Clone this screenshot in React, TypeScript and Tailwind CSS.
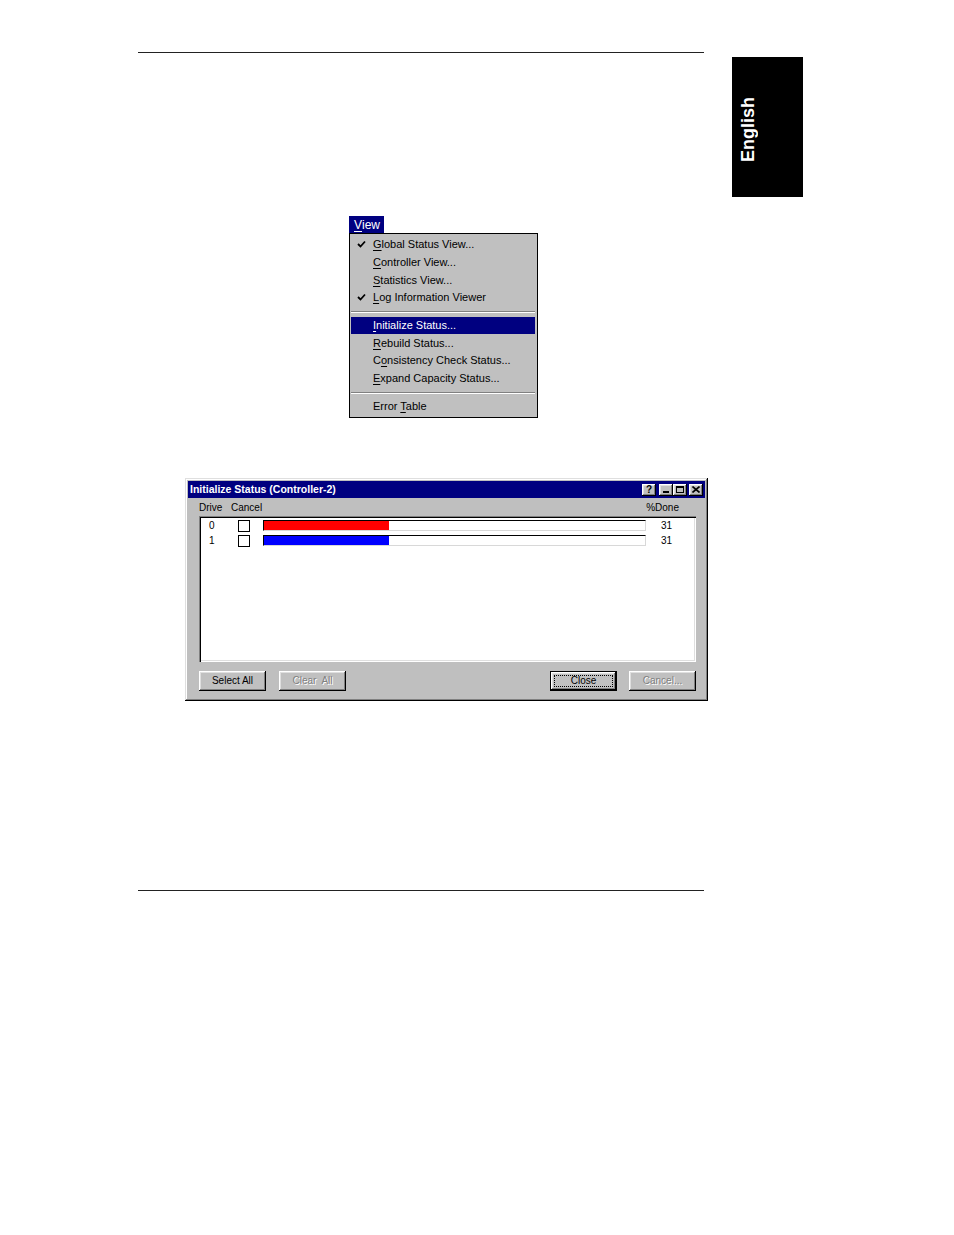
import React from "react";

const raised =
  "shadow-[inset_-1px_-1px_0_#000,inset_1px_1px_0_#fff,inset_-2px_-2px_0_#808080,inset_2px_2px_0_#dfdfdf]";

function Check() {
  return (
    <svg width="9" height="9" viewBox="0 0 9 9" className="block">
      <path d="M1 4 L3.5 6.5 L8 1.5" stroke="#000" strokeWidth="1.8" fill="none" />
    </svg>
  );
}

function MenuItem({
  label,
  checked,
  active,
}: {
  label: React.ReactNode;
  checked?: boolean;
  active?: boolean;
}) {
  return (
    <div
      className={
        "flex items-center h-[17.7px] " +
        (active ? "bg-[#000080] text-white" : "text-black")
      }
    >
      <div className="w-[22px] flex justify-end pr-[7px]">{checked ? <Check /> : null}</div>
      <span className="leading-none">{label}</span>
    </div>
  );
}

function Sep() {
  return (
    <div className="py-[4px]">
      <div className="h-px bg-[#808080]" />
      <div className="h-px bg-white" />
    </div>
  );
}

function U({ children }: { children: React.ReactNode }) {
  return <span className="underline underline-offset-[2px]">{children}</span>;
}

function TitleBtn({ children, className = "" }: { children: React.ReactNode; className?: string }) {
  return (
    <div
      className={
        "w-[14px] h-[12px] bg-[#c0c0c0] flex items-center justify-center text-black " +
        raised +
        " " +
        className
      }
    >
      {children}
    </div>
  );
}

function Btn({
  label,
  disabled,
  isDefault,
}: {
  label: string;
  disabled?: boolean;
  isDefault?: boolean;
}) {
  const inner = (
    <div
      className={
        "w-full h-full flex items-center justify-center bg-[#c0c0c0] " +
        raised +
        (disabled ? " text-[#808080] [text-shadow:1px_1px_0_#fff]" : " text-black")
      }
    >
      {isDefault ? (
        <div className="border border-dotted border-black w-[59px] h-[12px] flex items-center justify-center leading-none">
          {label}
        </div>
      ) : (
        <span className="leading-none whitespace-pre">{label}</span>
      )}
    </div>
  );
  if (isDefault) {
    return <div className="w-[67px] h-[20px] border border-black">{inner}</div>;
  }
  return <div className="w-[67px] h-[20px]">{inner}</div>;
}

function Row({ n, color }: { n: string; color: string }) {
  return (
    <div className="flex items-center h-[15px]">
      <div className="w-[37px] pl-[8px] leading-none">{n}</div>
      <div className="w-[12px] h-[12px] border border-black bg-white" />
      <div className="ml-[13px] w-[383px] h-[11px] bg-white border-t border-l border-black border-b border-r border-b-[#d8d8d8] border-r-[#d8d8d8] flex">
        <div className="h-full" style={{ width: "125px", backgroundColor: color }} />
      </div>
      <div className="ml-[15px] leading-none">31</div>
    </div>
  );
}

export default function App() {
  return (
    <div className="relative w-[954px] h-[1235px] bg-white overflow-hidden font-['Liberation_Sans',Arial,sans-serif]">
      {/* Side tab */}
      <div className="absolute left-[732px] top-[57px] w-[71px] h-[140px] bg-black flex items-center pl-[5px]">
        <span className="[writing-mode:vertical-rl] rotate-180 text-white font-bold text-[18px] leading-[22px] mt-[5px]">
          English
        </span>
      </div>

      {/* top rule */}
      <div className="pt-[52px] pl-[138px]">
        <div className="w-[566px] h-px bg-[#222]" />
      </div>

      {/* Menu */}
      <div className="ml-[349px] mt-[163px] text-[11px]">
        <div className="w-[35px] h-[17px] bg-[#000080] text-white flex items-center pl-[5px] text-[12px] leading-none">
          <U>V</U>iew
        </div>
        <div className="w-[189px] h-[185px] bg-[#c0c0c0] border border-black pt-[2px] pl-px pr-[2px]">
          <MenuItem checked label={<><U>G</U>lobal Status View...</>} />
          <MenuItem label={<><U>C</U>ontroller View...</>} />
          <MenuItem label={<><U>S</U>tatistics View...</>} />
          <MenuItem checked label={<><U>L</U>og Information Viewer</>} />
          <Sep />
          <MenuItem active label={<><U>I</U>nitialize Status...</>} />
          <MenuItem label={<><U>R</U>ebuild Status...</>} />
          <MenuItem label={<>C<U>o</U>nsistency Check Status...</>} />
          <MenuItem label={<><U>E</U>xpand Capacity Status...</>} />
          <Sep />
          <MenuItem label={<>Error <U>T</U>able</>} />
        </div>
      </div>

      {/* Dialog */}
      <div
        className={
          "ml-[185px] mt-[60px] w-[523px] h-[223px] bg-[#bfbfbf] p-[3px] flex flex-col text-[10px] " +
          "shadow-[inset_-1px_-1px_0_#000,inset_1px_1px_0_#dfdfdf,inset_-2px_-2px_0_#808080,inset_2px_2px_0_#fff]"
        }
      >
        <div className="h-[17px] bg-[#000080] flex items-center pl-[2px] pr-[2px]">
          <span className="text-white font-bold text-[10.5px] leading-none">
            Initialize Status (Controller-2)
          </span>
          <div className="ml-auto flex items-center">
            <TitleBtn>
              <span className="font-bold text-[10px] leading-none">?</span>
            </TitleBtn>
            <TitleBtn className="ml-[3px]">
              <div className="w-[6px] h-[2px] bg-black mt-[5px] mr-[1px]" />
            </TitleBtn>
            <TitleBtn>
              <div className="w-[8px] h-[7px] border border-black border-t-2 mb-px" />
            </TitleBtn>
            <TitleBtn className="ml-[2px]">
              <svg width="8" height="7" viewBox="0 0 8 7">
                <path d="M0.5 0.5 L7.5 6.5 M7.5 0.5 L0.5 6.5" stroke="#000" strokeWidth="1.6" />
              </svg>
            </TitleBtn>
          </div>
        </div>

        <div className="pl-[11px] pr-[9px] flex flex-col">
          <div className="h-[18px] flex items-center text-black leading-none pt-px">
            <span className="w-[32px]">Drive</span>
            <span>Cancel</span>
            <span className="ml-auto mr-[17px]">%Done</span>
          </div>
          <div className="h-[146px] bg-white shadow-[inset_1px_1px_0_#808080,inset_2px_2px_0_#000,inset_-1px_-1px_0_#fff,inset_-2px_-2px_0_#dfdfdf] pt-[2px] pl-[2px] text-black">
            <Row n="0" color="#ff0000" />
            <Row n="1" color="#0000ff" />
          </div>
          <div className="mt-[9px] flex items-center">
            <Btn label="Select All" />
            <div className="ml-[13px]">
              <Btn label="Clear  All" disabled />
            </div>
            <div className="ml-auto">
              <Btn label="Close" isDefault />
            </div>
            <div className="ml-[12px]">
              <Btn label="Cancel..." disabled />
            </div>
          </div>
        </div>
      </div>

      {/* bottom rule */}
      <div className="mt-[189px] ml-[138px] w-[566px] h-px bg-[#222]" />
    </div>
  );
}
